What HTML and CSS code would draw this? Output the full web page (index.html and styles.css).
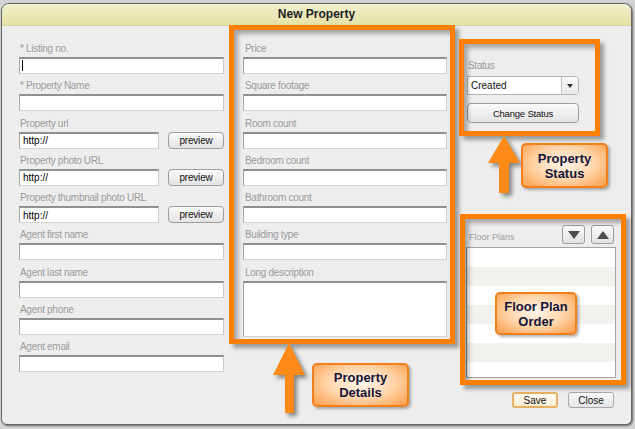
FILE: index.html
```html
<!DOCTYPE html>
<html lang="en">
<head>
    <meta charset="UTF-8">
    <meta name="viewport" content="width=device-width, initial-scale=1.0">
    <title>New Property</title>
    <link rel="stylesheet" href="styles.css">
</head>
<body>
    <div class="dialog">
        <div class="titlebar">New Property</div>

        <div class="content">
            <!-- основные данные -->
            <div class="column col-main">
                <div class="field">
                    <label>* Listing no.</label>
                    <div class="input-wrap">
                        <input type="text" class="text-input">
                        <span class="caret"></span>
                    </div>
                </div>
                <div class="field">
                    <label>* Property Name</label>
                    <input type="text" class="text-input">
                </div>
                <div class="field">
                    <label>Property url</label>
                    <div class="url-row">
                        <input type="text" class="text-input" value="http://">
                        <button class="btn preview">preview</button>
                    </div>
                </div>
                <div class="field">
                    <label>Property photo URL</label>
                    <div class="url-row">
                        <input type="text" class="text-input" value="http://">
                        <button class="btn preview">preview</button>
                    </div>
                </div>
                <div class="field">
                    <label>Property thumbnail photo URL</label>
                    <div class="url-row">
                        <input type="text" class="text-input" value="http://">
                        <button class="btn preview">preview</button>
                    </div>
                </div>
                <div class="field">
                    <label>Agent first name</label>
                    <input type="text" class="text-input">
                </div>
                <div class="field">
                    <label>Agent last name</label>
                    <input type="text" class="text-input">
                </div>
                <div class="field">
                    <label>Agent phone</label>
                    <input type="text" class="text-input">
                </div>
                <div class="field">
                    <label>Agent email</label>
                    <input type="text" class="text-input">
                </div>
            </div>

            <!-- детали -->
            <div class="column col-details">
                <div class="field">
                    <label>Price</label>
                    <input type="text" class="text-input">
                </div>
                <div class="field">
                    <label>Square footage</label>
                    <input type="text" class="text-input">
                </div>
                <div class="field">
                    <label>Room count</label>
                    <input type="text" class="text-input">
                </div>
                <div class="field">
                    <label>Bedroom count</label>
                    <input type="text" class="text-input">
                </div>
                <div class="field">
                    <label>Bathroom count</label>
                    <input type="text" class="text-input">
                </div>
                <div class="field">
                    <label>Building type</label>
                    <input type="text" class="text-input">
                </div>
                <div class="field">
                    <label>Long description</label>
                    <textarea class="text-area"></textarea>
                </div>
            </div>

            <!-- статус и планы -->
            <div class="column col-side">
                <div class="status-section">
                    <label class="side-label">Status</label>
                    <div class="select">
                        <span class="select-value">Created</span>
                        <span class="select-arrow"></span>
                    </div>
                    <button class="btn change-status">Change Status</button>
                </div>

                <div class="floor-header">
                    <span class="floor-label">Floor Plans</span>
                    <div class="floor-buttons">
                        <button class="btn order-btn">
                            <svg width="12" height="8" viewBox="0 0 12 8"><polygon points="0,0 12,0 6,8" fill="#4d4d4d"/></svg>
                        </button>
                        <button class="btn order-btn">
                            <svg width="12" height="8" viewBox="0 0 12 8"><polygon points="0,8 12,8 6,0" fill="#4d4d4d"/></svg>
                        </button>
                    </div>
                </div>
                <div class="floor-list"></div>

                <div class="actions">
                    <button class="btn save">Save</button>
                    <button class="btn close">Close</button>
                </div>
            </div>
        </div>
    </div>

    <!-- аннотации поверх диалога -->
    <div class="highlight hl-details"></div>
    <div class="highlight hl-status"></div>
    <div class="highlight hl-floor"></div>

    <svg class="arrow arrow-details" width="50" height="85" viewBox="0 0 50 85">
        <polygon points="21,5 37,37 26,37 26,75 17,75 17,37 5,37" fill="#ff8a17"/>
    </svg>
    <svg class="arrow arrow-status" width="50" height="70" viewBox="0 0 50 70">
        <polygon points="20,4 36,31 25,31 25,61 15,61 15,31 4,31" fill="#ff8a17"/>
    </svg>

    <div class="callout co-details">Property<br>Details</div>
    <div class="callout co-status">Property<br>Status</div>
    <div class="callout co-floor">Floor Plan<br>Order</div>
</body>
</html>
```

FILE: styles.css
```css
body {
    margin: 0;
    width: 635px;
    height: 429px;
    overflow: hidden;
    position: relative;
    background-color: #d4d4d4;
    font-family: "Liberation Sans", Arial, sans-serif;
}
.dialog {
    box-sizing: border-box;
    width: 631px;
    height: 422px;
    margin: 3px 0 0 1px;
    background-color: #ededed;
    border: 1px solid #666;
    border-radius: 8px 8px 6px 6px;
    box-shadow: 1px 1px 2px rgba(0,0,0,0.5);
    overflow: hidden;
}
.titlebar {
    box-sizing: border-box;
    height: 22px;
    line-height: 21px;
    text-align: center;
    font-size: 12px;
    font-weight: bold;
    color: #222;
    background: linear-gradient(#f2f0cd, #e4e1a5);
    border-bottom: 1px solid #d6d4a6;
}
.content {
    display: flex;
    gap: 19px;
    padding: 17px 0 0 17px;
}
.col-main {
    width: 205px;
}
.col-details {
    width: 204px;
}
.col-side {
    width: 150px;
}
.field {
    margin-bottom: 6.25px;
}
.field label,
.side-label {
    display: block;
    font-size: 10px;
    line-height: 12px;
    color: #9b9b9b;
    letter-spacing: -0.3px;
    margin: 0 0 2px 1px;
}
.col-details .field label {
    margin-left: 2px;
}
.text-input,
.text-area {
    box-sizing: border-box;
    display: block;
    width: 100%;
    height: 17px;
    margin: 0;
    padding: 0 3px;
    background-color: #fff;
    border: 1px solid;
    border-top-width: 2px;
    border-color: #8d9191 #c8caca #d3d5d5 #a3a7a7;
    font-family: "Liberation Sans", Arial, sans-serif;
    font-size: 10px;
    color: #000;
    outline: none;
}
.text-area {
    height: 56px;
    resize: none;
}
.input-wrap {
    position: relative;
}
.caret {
    position: absolute;
    left: 3px;
    top: 3px;
    width: 1px;
    height: 11px;
    background-color: #000;
}
.url-row {
    display: flex;
    justify-content: space-between;
}
.url-row .text-input {
    width: 140px;
}
.btn {
    box-sizing: border-box;
    margin: 0;
    padding: 0;
    font-family: "Liberation Sans", Arial, sans-serif;
    font-size: 10px;
    color: #111;
    background: linear-gradient(#fbfbfb, #e3e3e3);
    border: 1px solid #9c9c9c;
    border-radius: 4px;
    cursor: pointer;
}
.preview {
    width: 56px;
    height: 17px;
    letter-spacing: -0.2px;
}
.status-section {
    margin-top: 17px;
}
.side-label {
    margin-left: 2px;
    margin-bottom: 4px;
}
.select {
    box-sizing: border-box;
    display: flex;
    width: 112px;
    height: 19px;
    margin-left: 1px;
    background-color: #fff;
    border: 1px solid #b4b4b4;
    border-radius: 0 4px 4px 0;
}
.select-value {
    flex: 1;
    font-size: 10px;
    line-height: 17px;
    padding-left: 3px;
    color: #111;
}
.select-arrow {
    width: 16px;
    border-left: 1px solid #c4c4c4;
    background: linear-gradient(#fafafa, #eaeaea);
    border-radius: 0 3px 3px 0;
    display: flex;
    align-items: center;
    justify-content: center;
}
.select-arrow::after {
    content: "";
    border-left: 3px solid transparent;
    border-right: 3px solid transparent;
    border-top: 4px solid #333;
}
.change-status {
    display: block;
    width: 112px;
    height: 20px;
    margin: 8px 0 0 1px;
    font-size: 9.5px;
    letter-spacing: -0.2px;
}
.floor-header {
    display: flex;
    justify-content: space-between;
    align-items: flex-end;
    height: 19px;
    margin-top: 102px;
    padding-right: 2px;
}
.floor-label {
    font-size: 9px;
    line-height: 11px;
    color: #a0a0a0;
    margin-left: 3px;
    margin-bottom: 1px;
}
.floor-buttons {
    display: flex;
    gap: 6px;
}
.order-btn {
    width: 23px;
    height: 19px;
    border-radius: 3px;
    display: flex;
    align-items: center;
    justify-content: center;
}
.floor-list {
    box-sizing: border-box;
    height: 131px;
    margin-top: 3px;
    border: 1px solid #a3a3a3;
    border-left-color: #8c8c8c;
    background: repeating-linear-gradient(#fff 0, #fff 19px, #f2f1ee 19px, #f2f1ee 38px);
}
.actions {
    display: flex;
    justify-content: flex-end;
    gap: 10px;
    margin-top: 14px;
    padding-right: 2px;
}
.save,
.close {
    width: 46px;
    height: 16px;
    border-radius: 3px;
}
.save {
    border: 2px solid #e6b063;
    background: linear-gradient(#fffcf0, #f7edd2);
}
.close {
    border: 1px solid #a9a9a9;
    background: linear-gradient(#fafafa, #e4e4e4);
}

/* аннотации */
.highlight {
    position: absolute;
    box-sizing: border-box;
    border: 5px solid #ff8000;
    box-shadow: 4px 4px 4px rgba(0,0,0,0.35), inset 4px 4px 4px rgba(0,0,0,0.3);
}
.hl-details {
    left: 229px;
    top: 25px;
    width: 226px;
    height: 319px;
}
.hl-status {
    left: 459px;
    top: 39px;
    width: 141px;
    height: 97px;
}
.hl-floor {
    left: 460px;
    top: 214px;
    width: 166px;
    height: 171px;
}
.arrow {
    position: absolute;
    filter: drop-shadow(3px 3px 2px rgba(0,0,0,0.45));
}
.arrow-details {
    left: 268px;
    top: 338px;
}
.arrow-status {
    left: 484px;
    top: 132px;
}
.callout {
    position: absolute;
    box-sizing: border-box;
    display: flex;
    align-items: center;
    justify-content: center;
    text-align: center;
    font-size: 13px;
    font-weight: bold;
    line-height: 15px;
    color: #15153a;
    border: 2px solid #f07f1e;
    border-radius: 5px;
    background: radial-gradient(ellipse at 50% 45%, #fff6ec 0%, #ffd5aa 50%, #ff9d48 100%);
    box-shadow: 2px 2px 3px rgba(0,0,0,0.3);
}
.co-details {
    left: 312px;
    top: 363px;
    width: 97px;
    height: 44px;
}
.co-status {
    left: 521px;
    top: 143px;
    width: 87px;
    height: 45px;
}
.co-floor {
    left: 495px;
    top: 292px;
    width: 82px;
    height: 43px;
}
```
